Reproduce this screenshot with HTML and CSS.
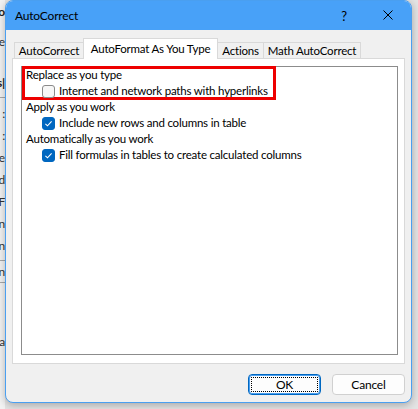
FILE: index.html
```html
<!DOCTYPE html>
<html>
<head>
<meta charset="utf-8">
<link rel="stylesheet" href="styles.css">
</head>
<body>
<div class="behind">
  <div class="frag frag-top bold">o</div>
  <div class="frag frag-ce">ce</div>
  <div class="frag frag-s bold">s|</div>
  <div class="frag-list">
    <div class="frag">:</div>
    <div class="frag">:</div>
    <div class="frag">e</div>
    <div class="frag">d</div>
    <div class="frag">F</div>
    <div class="frag">n</div>
    <div class="frag">n</div>
  </div>
  <div class="frag frag-boxed">n</div>
  <div class="frag frag-a">a</div>
</div>
<div class="dialog">
  <div class="titlebar">
    <span class="title">AutoCorrect</span>
    <span class="help">?</span>
    <span class="close">
      <svg width="10" height="10" viewBox="0 0 10 10"><path d="M0.5 0.5 L9.5 9.5 M9.5 0.5 L0.5 9.5" stroke="#000" stroke-width="1" fill="none"/></svg>
    </span>
  </div>
  <div class="content">
    <div class="tabs">
      <div class="tab tab-autocorrect">AutoCorrect</div>
      <div class="tab tab-active">AutoFormat As You Type</div>
      <div class="tab tab-actions">Actions</div>
      <div class="tab tab-math">Math AutoCorrect</div>
    </div>
    <div class="panel">
      <div class="group">
        <div class="highlight"></div>
        <div class="heading">Replace as you type</div>
        <div class="check-row"><span class="box"></span><span>Internet and network paths with hyperlinks</span></div>
        <div class="heading">Apply as you work</div>
        <div class="check-row"><span class="box checked"><svg width="13" height="13" viewBox="0 0 13 13"><path d="M3.4 6.8 L5.5 8.8 L9.6 4.4" stroke="#fff" stroke-width="1.1" fill="none"/></svg></span><span>Include new rows and columns in table</span></div>
        <div class="heading">Automatically as you work</div>
        <div class="check-row"><span class="box checked"><svg width="13" height="13" viewBox="0 0 13 13"><path d="M3.4 6.8 L5.5 8.8 L9.6 4.4" stroke="#fff" stroke-width="1.1" fill="none"/></svg></span><span>Fill formulas in tables to create calculated columns</span></div>
      </div>
    </div>
    <div class="buttons">
      <button class="btn btn-ok">OK</button>
      <button class="btn btn-cancel">Cancel</button>
    </div>
  </div>
</div>
</body>
</html>
```
FILE: styles.css
```css
* { box-sizing: border-box; }
html, body { margin: 0; padding: 0; }
body {
  width: 418px;
  height: 409px;
  overflow: hidden;
  background: #e4e4e4;
  display: flex;
  align-items: flex-start;
  font-family: Lato, "Liberation Sans", sans-serif;
  font-size: 11.5px;
  letter-spacing: -0.2px;
  color: #000;
}
.behind {
  width: 5px;
  height: 409px;
  flex: none;
  overflow: hidden;
  background: #f3f3f3;
  display: flex;
  flex-direction: column;
  color: #333;
  font-size: 12px;
}
.frag {
  height: 22px;
  line-height: 22px;
  white-space: nowrap;
  display: flex;
  justify-content: flex-end;
}
.bold { font-weight: bold; color: #222; }
.frag-top { height: 24px; line-height: 24px; }
.frag-ce { margin-top: 7px; }
.frag-s { margin-top: 19px; height: 26px; border-bottom: 1px solid #a9a9a9; }
.frag-list { margin-top: 5px; border-bottom: 1px solid #a9a9a9; padding-bottom: 3px; }
.frag-boxed { border-bottom: 1px solid #a9a9a9; }
.frag-a { margin-top: 48px; }

.dialog {
  width: 407px;
  height: 403px;
  flex: none;
  border: 1px solid #4a9ff0;
  border-radius: 8px;
  background: #f0f0f0;
  box-shadow: 0 2px 8px rgba(0,0,0,0.28);
  overflow: hidden;
  display: flex;
  flex-direction: column;
}
.titlebar {
  height: 29px;
  background: #48a1f8;
  display: flex;
  align-items: center;
  padding-left: 9px;
  flex: none;
}
.title { flex: 1; font-size: 12px; padding-bottom: 1px; }
.help {
  width: 42px;
  text-align: center;
  font-size: 13px;
}
.close {
  width: 46px;
  display: flex;
  justify-content: center;
  align-items: center;
  padding-bottom: 1px;
}
.close svg { display: block; }
.content {
  padding: 8px 6px 0 6px;
  display: flex;
  flex-direction: column;
}
.tabs {
  height: 20px;
  display: flex;
  align-items: flex-end;
  padding-left: 2px;
}
.tab {
  height: 16px;
  border: 1px solid #d9d9d9;
  border-bottom: none;
  background: #f0f0f0;
  display: flex;
  align-items: center;
  justify-content: center;
  white-space: nowrap;
}
.tab-autocorrect { width: 70px; }
.tab-active {
  width: 135px;
  height: 21px;
  margin-left: -1px;
  margin-bottom: -1px;
  background: #fff;
  position: relative;
  z-index: 1;
  padding-bottom: 2px;
}
.tab-actions { width: 47px; margin-left: -1px; }
.tab-math { width: 98px; margin-left: -1px; }
.panel {
  width: 393px;
  height: 306px;
  border: 1px solid #d9d9d9;
  background: #fff;
  padding: 7px 6px 8px 8px;
}
.group {
  height: 100%;
  border: 1px solid #8c8c8c;
  position: relative;
}
.highlight {
  position: absolute;
  left: 0;
  top: -1px;
  width: 254px;
  height: 34px;
  border: 3px solid #ee0000;
}
.heading {
  height: 16px;
  line-height: 16px;
  padding-left: 4px;
  white-space: nowrap;
}
.check-row {
  height: 16px;
  line-height: 16px;
  padding-left: 20px;
  display: flex;
  align-items: center;
  gap: 4px;
  white-space: nowrap;
}
.box {
  width: 13px;
  height: 13px;
  flex: none;
  border: 1px solid #8a8a8a;
  border-radius: 3px;
  background: #f7f7f7;
  position: relative;
}
.box.checked {
  border-color: #0067c0;
  background: #0067c0;
}
.box svg { position: absolute; left: -1px; top: -1px; display: block; }
.buttons {
  margin-top: 10px;
  display: flex;
  justify-content: flex-end;
  gap: 11px;
}
.btn {
  height: 21px;
  border-radius: 4px;
  font-family: inherit;
  font-size: 12px;
  letter-spacing: -0.2px;
  color: #000;
  padding: 0;
  background: #fdfdfd;
  border: 1px solid #d0d0d0;
}
.btn-ok {
  width: 73px;
  border: 1px solid #0067c0;
  box-shadow: inset 0 0 0 1px #4a9ff0;
  outline: 1px dotted #000;
  outline-offset: -4px;
}
.btn-cancel { width: 73px; }
```
